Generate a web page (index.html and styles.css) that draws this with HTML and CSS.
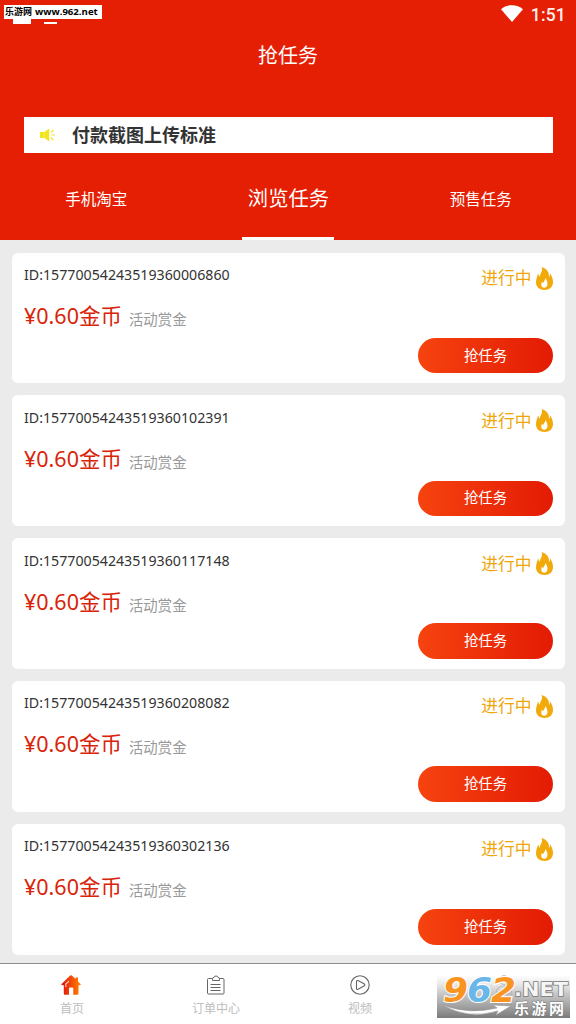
FILE: index.html
```
<!DOCTYPE html>
<html lang="zh-CN">
<head>
<meta charset="utf-8">
<title>抢任务</title>
<link rel="stylesheet" href="styles.css">
</head>
<body>
<svg class="defs" aria-hidden="true">
  <defs>
    <symbol id="flame" viewBox="0 0 17 23">
      <path d="M5.500 0C11 1.500 13.600 5.500 12.900 10C14 9 14.200 7.500 13.800 6C16 9 17 12 17 15C17 20 13.500 23 8.500 23C3.500 23 0 20 0 15.500C0 12 1.300 9.500 2 6.500C2.800 8 3 9 3.800 9.800C4 6 7.500 4 5.500 0ZM9.200 10.800C9.700 13.500 7.600 14 7.100 16.500L5.900 14.800C4.800 17.500 5 20.800 8.300 20.800C12 20.800 12.700 15.500 9.200 10.800Z" fill="#f2a90a" fill-rule="evenodd"/>
    </symbol>
  </defs>
</svg>
<div class="app">
  <header class="header">
    <div class="status">
      <svg class="wifi" viewBox="0 0 22 17"><path d="M0 4.200C6-1.200 16-1.200 22 4.200L11 17Z" fill="#fff"/></svg>
      <span class="clock">1:51</span>
    </div>
    <h1 class="title">抢任务</h1>
    <div class="notice">
      <svg class="speaker" viewBox="0 0 16 14"><path d="M0 4h4v6H0zM4.300 4L9.200 0.500v13L4.300 10z" fill="#f2e51c"/><path d="M11 4.500l2.500-2.500M11.500 7H15M11 9.500l2.500 2.500" stroke="#f2e51c" stroke-width="1.200"/></svg>
      <span>付款截图上传标准</span>
    </div>
    <nav class="tabs">
      <span class="tab">手机淘宝</span>
      <span class="tab active">浏览任务</span>
      <span class="tab">预售任务</span>
    </nav>
  </header>
  <main class="list">
    <section class="card">
      <div class="info"><div class="id">ID:15770054243519360006860</div><div class="reward"><span class="price">¥0.60金币</span><span class="label">活动赏金</span></div></div>
      <div class="side"><div class="state"><span>进行中</span><svg class="flame"><use href="#flame"/></svg></div><button class="grab">抢任务</button></div>
    </section>
    <section class="card">
      <div class="info"><div class="id">ID:15770054243519360102391</div><div class="reward"><span class="price">¥0.60金币</span><span class="label">活动赏金</span></div></div>
      <div class="side"><div class="state"><span>进行中</span><svg class="flame"><use href="#flame"/></svg></div><button class="grab">抢任务</button></div>
    </section>
    <section class="card">
      <div class="info"><div class="id">ID:15770054243519360117148</div><div class="reward"><span class="price">¥0.60金币</span><span class="label">活动赏金</span></div></div>
      <div class="side"><div class="state"><span>进行中</span><svg class="flame"><use href="#flame"/></svg></div><button class="grab">抢任务</button></div>
    </section>
    <section class="card">
      <div class="info"><div class="id">ID:15770054243519360208082</div><div class="reward"><span class="price">¥0.60金币</span><span class="label">活动赏金</span></div></div>
      <div class="side"><div class="state"><span>进行中</span><svg class="flame"><use href="#flame"/></svg></div><button class="grab">抢任务</button></div>
    </section>
    <section class="card">
      <div class="info"><div class="id">ID:15770054243519360302136</div><div class="reward"><span class="price">¥0.60金币</span><span class="label">活动赏金</span></div></div>
      <div class="side"><div class="state"><span>进行中</span><svg class="flame"><use href="#flame"/></svg></div><button class="grab">抢任务</button></div>
    </section>
  </main>
  <footer class="bottom">
    <div class="item">
      <svg class="icon home" viewBox="0 0 20 20">
        <defs><linearGradient id="warm"><stop offset="0.100" stop-color="#e51a0c"/><stop offset="0.900" stop-color="#ff7800"/></linearGradient></defs>
        <path d="M9.200 0.500Q10 0 10.800 0.500L14.500 4V2.500H17V6.500L19.700 9.200Q20.200 10.500 17.500 10.300V18.500Q17.500 19.700 16.300 19.700H12.300V13.500Q12.300 12.500 11.300 12.500H9Q8 12.500 8 13.500V19.700H4Q2.800 19.700 2.800 18.500V10.300Q-0.200 10.500 0.300 9.200Z" fill="url(#warm)"/>
        <path d="M4.800 12V9L8 6.200" fill="none" stroke="#ffd9cc" stroke-width="1.100"/>
      </svg>
      <span>首页</span>
    </div>
    <div class="item">
      <svg class="icon" viewBox="0 0 20 20" fill="none" stroke="#666" stroke-width="1"><path d="M6 3.500H2.500Q1.500 3.500 1.500 4.500V18Q1.500 19 2.500 19H17Q18 19 18 18V4.500Q18 3.500 17 3.500H13.500M6.500 5.500H13.500V3.500Q13.500 2.500 12 2.500Q12 1 10 1Q8 1 8 2.500Q6.500 2.500 6.500 3.500ZM4.500 9.500H14.500M4.500 12.500H14.500M4.500 15.500H14.500"/></svg>
      <span>订单中心</span>
    </div>
    <div class="item">
      <svg class="icon" viewBox="0 0 20 20" fill="none" stroke="#666" stroke-width="1.100"><circle cx="10" cy="10" r="9.200"/><path d="M6.500 6.700Q6.500 5 8 5.600L14 8.700Q15.500 9.900 14 11L8 14.300Q6.500 15 6.500 13.300Z"/></svg>
      <span>视频</span>
    </div>
    <div class="item">
      <svg class="icon" viewBox="0 0 20 20" fill="none" stroke="#666"><circle cx="10" cy="5" r="4.500"/><path d="M2 19Q2 11 10 11Q18 11 18 19Z"/></svg>
      <span>我的</span>
    </div>
  </footer>
  <div class="site-tag"><span class="site-name">乐游网</span><span>www.962.net</span></div>
  <i class="notif box"></i><i class="notif dash"></i>
  <svg class="watermark" viewBox="0 0 133 43">
    <defs>
      <linearGradient id="shade" x2="0" y2="1"><stop offset="0" stop-color="#fff" stop-opacity="0.600"/><stop offset="0.450" stop-color="#bbb" stop-opacity="0.850"/><stop offset="1" stop-color="#777" stop-opacity="0.970"/></linearGradient>
    </defs>
    <rect width="133" height="43" fill="url(#shade)"/>
    <path d="M6 30Q30 45 61 36L59 40L74 31L56 30L60 33Q32 40 6 30Z" fill="#fff" stroke="#999" stroke-width="0.600"/>
    <g class="digits">
      <text x="6" y="27" textLength="25" lengthAdjust="spacingAndGlyphs" fill="#f99422">9</text>
      <text x="30" y="27" textLength="25" lengthAdjust="spacingAndGlyphs" fill="#68b7e8">6</text>
      <text x="54" y="27" textLength="25" lengthAdjust="spacingAndGlyphs" fill="#f99422">2</text>
    </g>
    <text class="net" x="77" y="21" textLength="54" lengthAdjust="spacingAndGlyphs">.NET</text>
    <text class="brand" x="77" y="38.500" textLength="50">乐游网</text>
  </svg>
</div>
</body>
</html>
```
FILE: styles.css
```
* { box-sizing: border-box; }
body {
  margin: 0;
  background: #ebebeb;
  color: #333;
  font-family: "Noto Sans", "Noto Sans CJK SC", sans-serif;
}
.defs { position: absolute; width: 0; height: 0; }
.app {
  position: relative;
  width: 576px;
  height: 1024px;
  overflow: hidden;
  display: flex;
  flex-direction: column;
}
.header {
  height: 240.400px;
  flex: none;
  display: flex;
  flex-direction: column;
  background: #e51f04;
  color: #fff;
}
.status {
  height: 29px;
  padding: 1px 10px 0 0;
  display: flex;
  justify-content: flex-end;
  align-items: center;
  gap: 8px;
}
.wifi { width: 22px; height: 17px; margin-top: -3px; }
.clock { font: 500 17.500px/28px Roboto, sans-serif; letter-spacing: 0.200px; color: #fff0ec; }
.title {
  margin: 0;
  height: 52px;
  font-size: 20px;
  line-height: 54px;
  font-weight: 400;
  text-align: center;
}
.notice {
  height: 36px;
  margin: 36px 23px 0 24px;
  padding-left: 16px;
  display: flex;
  align-items: center;
  gap: 16px;
  background: #fff;
  color: #333;
  font-size: 18px;
  line-height: 36px;
  font-weight: 700;
}
.speaker { width: 16px; height: 14px; }
.tabs {
  flex: 1;
  display: grid;
  grid-template-columns: repeat(3, 192.300px);
}
.tab {
  width: 92px;
  justify-self: center;
  font-size: 15.500px;
  line-height: 92px;
  text-align: center;
  white-space: nowrap;
}
.tab.active { border-bottom: 3.500px solid #fff; font-size: 20.300px; line-height: 90px; height: 87.400px; }
.list {
  flex: none;
  height: 722.600px;
  padding: 12.200px 11px 0 12px;
  display: flex;
  flex-direction: column;
  gap: 11.900px;
}
.card {
  height: 130.900px;
  flex: none;
  padding: 8.500px 12px;
  display: flex;
  justify-content: space-between;
  background: #fff;
  border-radius: 6px;
}
.id { height: 27px; font-size: 14.200px; line-height: 27px; }
.reward { display: flex; align-items: baseline; gap: 7px; line-height: 55px; }
.price { font-size: 21.500px; color: #d92409; }
.label { position: relative; top: 1px; font-size: 14.400px; color: #999; }
.side { display: flex; flex-direction: column; align-items: flex-end; }
.state {
  height: 33px;
  display: flex;
  align-items: center;
  gap: 4.500px;
  font-size: 16.800px;
  line-height: 33px;
  color: #efa60a;
}
.flame { width: 17px; height: 23px; margin-top: 1px; }
.grab {
  width: 135px;
  height: 35.700px;
  margin-top: 43.700px;
  padding: 0;
  border: 0;
  border-radius: 18px;
  background: linear-gradient(90deg, #f6430f, #e31b04);
  color: #fff;
  font-family: inherit;
  font-size: 14.400px;
  line-height: 34px;
}
.bottom {
  flex: 1;
  display: grid;
  grid-template-columns: repeat(4, 1fr);
  border-top: 1px solid #8d8d8d;
  background: #fff;
}
.item {
  padding-top: 11px;
  display: flex;
  flex-direction: column;
  align-items: center;
  gap: 5px;
  color: #bdbdbd;
  font-size: 12px;
  line-height: 18px;
}
.icon { width: 20px; height: 20px; }
.home { margin-right: 2px; }
.site-tag {
  position: absolute;
  left: 4px;
  top: 5px;
  width: 98px;
  height: 14px;
  display: flex;
  align-items: center;
  gap: 3px;
  padding-left: 1px;
  background: #fff;
  color: #000;
  font: 700 9.600px/14px "Open Sans", "Noto Sans CJK SC", sans-serif;
  white-space: nowrap;
}
.site-name { font-size: 9px; }
.notif { position: absolute; background: #fff; }
.box { left: 13px; top: 19px; width: 18px; height: 5px; }
.dash { left: 44px; top: 21.500px; width: 13px; height: 2px; }
.watermark { position: absolute; left: 437px; top: 975px; width: 133px; height: 43px; overflow: visible; }
.digits { font: italic 700 33px "DejaVu Sans", sans-serif; stroke: #fff; stroke-width: 2px; paint-order: stroke; }
.net { font: 700 20px "DejaVu Sans", sans-serif; fill: #f5f5f5; stroke: #777; stroke-width: 1.500px; paint-order: stroke; }
.brand { font: 700 15px "Noto Sans CJK SC", sans-serif; fill: #fff; stroke: #777; stroke-width: 1px; paint-order: stroke; }
```
